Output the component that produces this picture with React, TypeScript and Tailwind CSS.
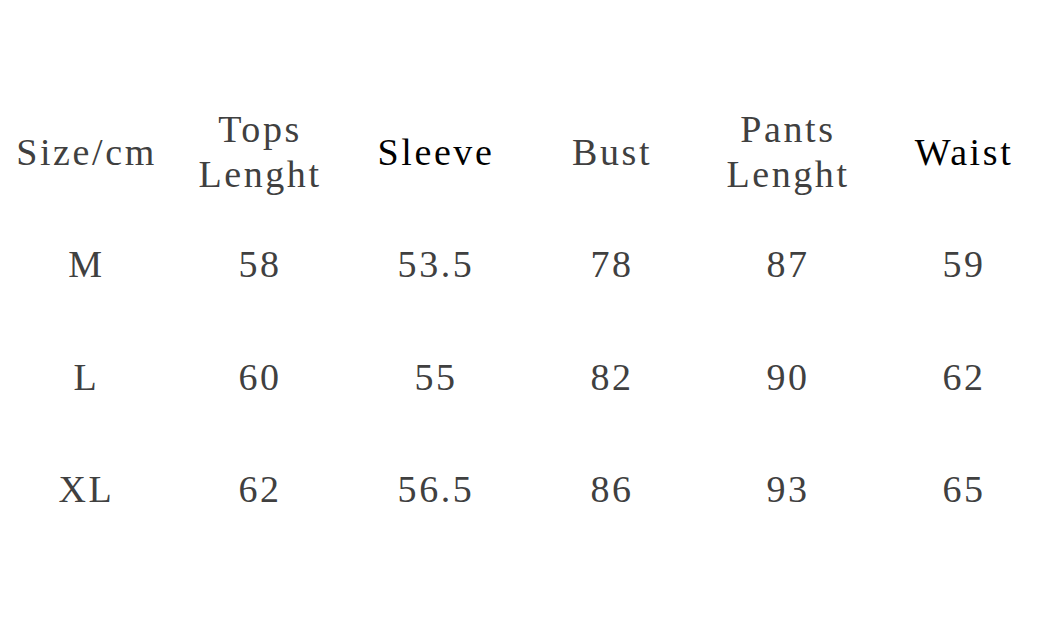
const headers = [
  { lines: ["Size/cm"], dark: false },
  { lines: ["Tops", "Lenght"], dark: false },
  { lines: ["Sleeve"], dark: true },
  { lines: ["Bust"], dark: false },
  { lines: ["Pants", "Lenght"], dark: false },
  { lines: ["Waist"], dark: true },
];

const rows = [
  ["M", "58", "53.5", "78", "87", "59"],
  ["L", "60", "55", "82", "90", "62"],
  ["XL", "62", "56.5", "86", "93", "65"],
];

export default function App() {
  return (
    <div className="w-[1046px] h-[629px] bg-white overflow-hidden pt-[96px] font-['Liberation_Serif',serif] text-[38px] tracking-[2.6px] text-[#404040]">
      <div className="grid grid-cols-[171px_repeat(5,176px)] auto-rows-[112.5px]">
        {headers.map((h, i) => (
          <div key={i} className="flex items-center justify-center pl-[2px]">
            <div
              className={`text-center leading-[45px] whitespace-nowrap ${
                h.dark ? "text-black" : ""
              }`}
            >
              {h.lines.map((l) => (
                <div key={l}>{l}</div>
              ))}
            </div>
          </div>
        ))}
        {rows.map((r, ri) =>
          r.map((v, ci) => (
            <div key={`${ri}-${ci}`} className="flex items-center justify-center pl-[2px]">
              <span>{v}</span>
            </div>
          ))
        )}
      </div>
    </div>
  );
}
